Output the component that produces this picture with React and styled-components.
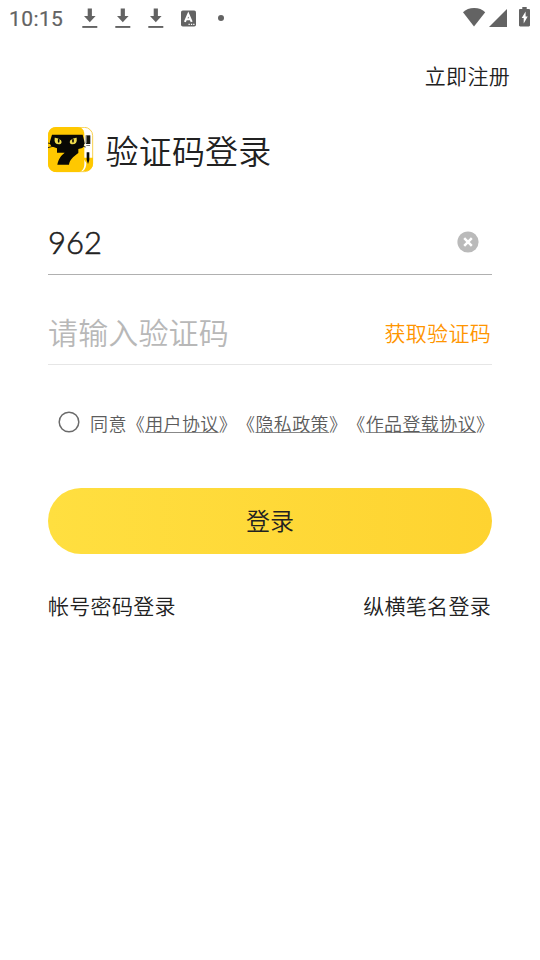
import React from "react";
import styled, { createGlobalStyle } from "styled-components";

const Global = createGlobalStyle`
  * { box-sizing: border-box; }
  body {
    margin: 0;
    background: #fff;
    color: #212121;
    font-family: "Noto Sans CJK SC", sans-serif;
    font-weight: 350;
    text-spacing-trim: space-all;
  }
  button {
    border: 0;
    padding: 0;
    background: none;
    color: inherit;
    font: inherit;
    letter-spacing: inherit;
  }
  svg { display: block; flex: none; }
`;

const Screen = styled.div`
  width: 540px;
  height: 960px;
  overflow: hidden;
  display: flex;
  flex-direction: column;
  background: #fff;
`;

const StatusBar = styled.header`
  height: 36px;
  padding: 0 10px 0 9px;
  display: flex;
  align-items: center;
  justify-content: space-between;
  color: #636363;
`;

const StatusGroup = styled.div`
  display: flex;
  align-items: center;
  height: 36px;
`;

const Clock = styled.span`
  width: 73px;
  padding-top: 2px;
  font: 400 21px/24px Roboto, sans-serif;
  letter-spacing: 0.4px;
  -webkit-text-stroke: 0.2px;
`;

const StatusIcons = styled.div`
  display: flex;
  gap: ${(p) => p.$gap || 0}px;
  align-items: center;
`;

const DotSlot = styled.span`
  padding-left: 22px;
`;

const SignalSlot = styled.span`
  padding: 0 12px 0 3px;
`;

const TopBar = styled.nav`
  height: 80px;
  padding-right: 30px;
  display: flex;
  justify-content: flex-end;
`;

const TextLink = styled.button`
  height: 32px;
  font-size: 21px;
  line-height: 32px;
  letter-spacing: 0.3px;
  white-space: nowrap;
  color: ${(p) => p.$color || "#212121"};
  margin-top: ${(p) => p.$top || 0}px;
  margin-bottom: ${(p) => p.$bottom || 0}px;
  margin-right: ${(p) => p.$right || 0}px;
`;

const Form = styled.main`
  padding: 0 48px;
  display: flex;
  flex-direction: column;
`;

const TitleRow = styled.div`
  display: flex;
  align-items: center;
  height: 68px;
`;

const Title = styled.h1`
  margin: 0 0 1px 11.5px;
  font-size: 33px;
  line-height: 48px;
  font-weight: 350;
  letter-spacing: 0.2px;
`;

const Field = styled.div`
  height: ${(p) => p.$height}px;
  display: flex;
  justify-content: space-between;
  align-items: flex-end;
  padding: 0 ${(p) => p.$inset || 0}px 10px 0;
  border-bottom: 1px solid ${(p) => p.$line};
`;

const Phone = styled.span`
  margin-bottom: 2px;
  font: 300 31px/40px Lato, sans-serif;
  -webkit-text-stroke: 0.55px;
`;

const ClearButton = styled.button`
  margin-bottom: 11px;
`;

const Placeholder = styled.span`
  margin-bottom: 1px;
  font-size: 30px;
  line-height: 44px;
  letter-spacing: 0.15px;
  color: #b8b8b8;
`;

const Agreement = styled.label`
  margin-top: 41px;
  height: 34px;
  padding-left: 10px;
  display: flex;
  align-items: center;
  color: #5c5c5c;
`;

const RadioIcon = styled.svg`
  margin: -2px 10px 0 0;
`;

const AgreementText = styled.span`
  font-size: 18px;
  line-height: 28px;
  letter-spacing: 0.38px;
  white-space: nowrap;
`;

const Doc = styled.span`
  text-decoration: underline;
  text-decoration-color: #888;
  text-decoration-thickness: 1px;
  text-underline-offset: 1px;
  text-decoration-skip-ink: none;
`;

const LoginButton = styled.button`
  && {
    height: 66px;
    margin-top: 47.5px;
    padding-bottom: 1px;
    border-radius: 33px;
    background: linear-gradient(90deg, #ffdf40, #fed330);
    font-size: 24px;
    line-height: 36px;
  }
`;

const Alternatives = styled.div`
  margin-top: 35.5px;
  display: flex;
  justify-content: space-between;
`;

const Radio = () => (
  <RadioIcon width="22" height="22" viewBox="0 0 22 22">
    <circle cx="11" cy="11" r="9.800" fill="none" stroke="#6b6b6b" strokeWidth="1.500" />
  </RadioIcon>
);

const Download = () => (
  <svg width="16" height="22" viewBox="0 0 16 22" fill="currentColor">
    <path d="M5.700 1.500h4.200v7.500h3.700L7.800 15.200 2 9h3.700z" />
    <path d="M.3 19h15v1.900H.3z" />
  </svg>
);

const Keyboard = () => (
  <svg width="15" height="17" viewBox="0 0 15 17">
    <rect y=".5" width="15" height="16" rx="1.800" fill="#636363" />
    <path d="M3.900 11.800 7.300 4l3.400 7.800M5.200 9.300h4.200" fill="none" stroke="#fff" strokeWidth="2" />
    <path d="M7.500 13.700h1.300v1.300H7.500zM9.900 13.700h1.300v1.300H9.900zM12.200 13.700h1.300v1.300h-1.300z" fill="#fff" />
  </svg>
);

const Dot = () => (
  <svg width="6" height="6" viewBox="0 0 6 6">
    <circle cx="3" cy="3" r="3" fill="#636363" />
  </svg>
);

const Wifi = () => (
  <svg width="23" height="20" viewBox="0 0 23 20" fill="currentColor">
    <path d="M11 18.500 0 4.200C2.700 1.500 6.700 0 11.200 0s8.300 1.500 11 4.200z" />
  </svg>
);

const Signal = () => (
  <svg width="18" height="18" viewBox="0 0 18 18" fill="currentColor">
    <path d="M18 0v18H0z" />
  </svg>
);

const Battery = () => (
  <svg width="11" height="22" viewBox="0 0 11 22">
    <path d="M3.300 0h4.400v2h2.100c.7 0 1.200.5 1.200 1.200v15c0 .7-.5 1.200-1.200 1.200H1.200C.5 19.400 0 18.900 0 18.200v-15C0 2.500.5 2 1.200 2h2.100z" fill="#636363" />
    <path d="M6.600 4.500 2.700 11h2v5.500L8.700 9.500H6.600z" fill="#fff" />
  </svg>
);

const Logo = () => (
  <svg width="46" height="46" viewBox="0 0 138 138">
    <rect x="1" y="1" width="133" height="133" rx="25" fill="#fff" stroke="#f7c62a" strokeWidth="2.500" />
    <path d="M25 0h64c13 0 20 9 20 24v86c0 15-7 25-20 25H25C10 135 0 125 0 110V25C0 10 10 0 25 0z" fill="#ffc800" />
    <path d="M105 92h30v17c0 14-9 24-24 24h-7c8-6 11-14 11-25z" fill="#ffc800" />
    <path d="M12 23h92l5 20q1 14-6 20l-12 3v12C74 90 65 100 63 113H28c3-17 11-27 22-36H27V64l-17-6Q3 48 7 40z" fill="#080804" />
    <path d="M0 48q12 2 25 9M0 62q12-5 25-4M112 48q-12 1-20 7M113 60q-12-4-20-3" fill="none" stroke="#080804" strokeWidth="2.500" />
    <path d="M20 32q9-1 19 8 5 9-4 12-18 1-15-20zM86 32q-9-1-19 8-5 9 4 12 18 1 15-20z" fill="#eedb4c" />
    <ellipse cx="32" cy="41" rx="2.600" ry="6" />
    <ellipse cx="75" cy="41" rx="2.600" ry="6" />
    <path d="M114 25h13v26h-13z" fill="#17170f" />
    <path d="M112 25h4v24h-4z" fill="#a5a395" />
    <path d="M115 54h11v3h-11z" fill="#777" />
    <path d="M116 76h8v23l-4 12-4-12z" fill="#080804" />
  </svg>
);

const Clear = () => (
  <svg width="22" height="22" viewBox="0 0 22 22">
    <circle cx="11" cy="11" r="10.600" fill="#bababa" />
    <path d="m7.200 7.200 7.600 7.600m0-7.600-7.600 7.600" stroke="#fff" strokeWidth="2.500" />
  </svg>
);

export default function App() {
  return (
    <Screen>
      <Global />
      <StatusBar>
        <StatusGroup>
          <Clock>10:15</Clock>
          <StatusIcons $gap={17}>
            <Download />
            <Download />
            <Download />
            <Keyboard />
          </StatusIcons>
          <DotSlot>
            <Dot />
          </DotSlot>
        </StatusGroup>
        <StatusIcons>
          <Wifi />
          <SignalSlot>
            <Signal />
          </SignalSlot>
          <Battery />
        </StatusIcons>
      </StatusBar>
      <TopBar>
        <TextLink $top={23}>立即注册</TextLink>
      </TopBar>
      <Form>
        <TitleRow>
          <Logo />
          <Title>验证码登录</Title>
        </TitleRow>
        <Field $height={91} $inset={13} $line="#b0b0b0">
          <Phone>962</Phone>
          <ClearButton aria-label="清除">
            <Clear />
          </ClearButton>
        </Field>
        <Field $height={90} $line="#e6e6e6">
          <Placeholder>请输入验证码</Placeholder>
          <TextLink $color="#ff9500" $bottom={6} $right={1}>获取验证码</TextLink>
        </Field>
        <Agreement>
          <Radio />
          <AgreementText>
            同意《<Doc>用户协议</Doc>》《<Doc>隐私政策</Doc>》《<Doc>作品登载协议</Doc>》
          </AgreementText>
        </Agreement>
        <LoginButton>登录</LoginButton>
        <Alternatives>
          <TextLink>帐号密码登录</TextLink>
          <TextLink $right={1}>纵横笔名登录</TextLink>
        </Alternatives>
      </Form>
    </Screen>
  );
}
